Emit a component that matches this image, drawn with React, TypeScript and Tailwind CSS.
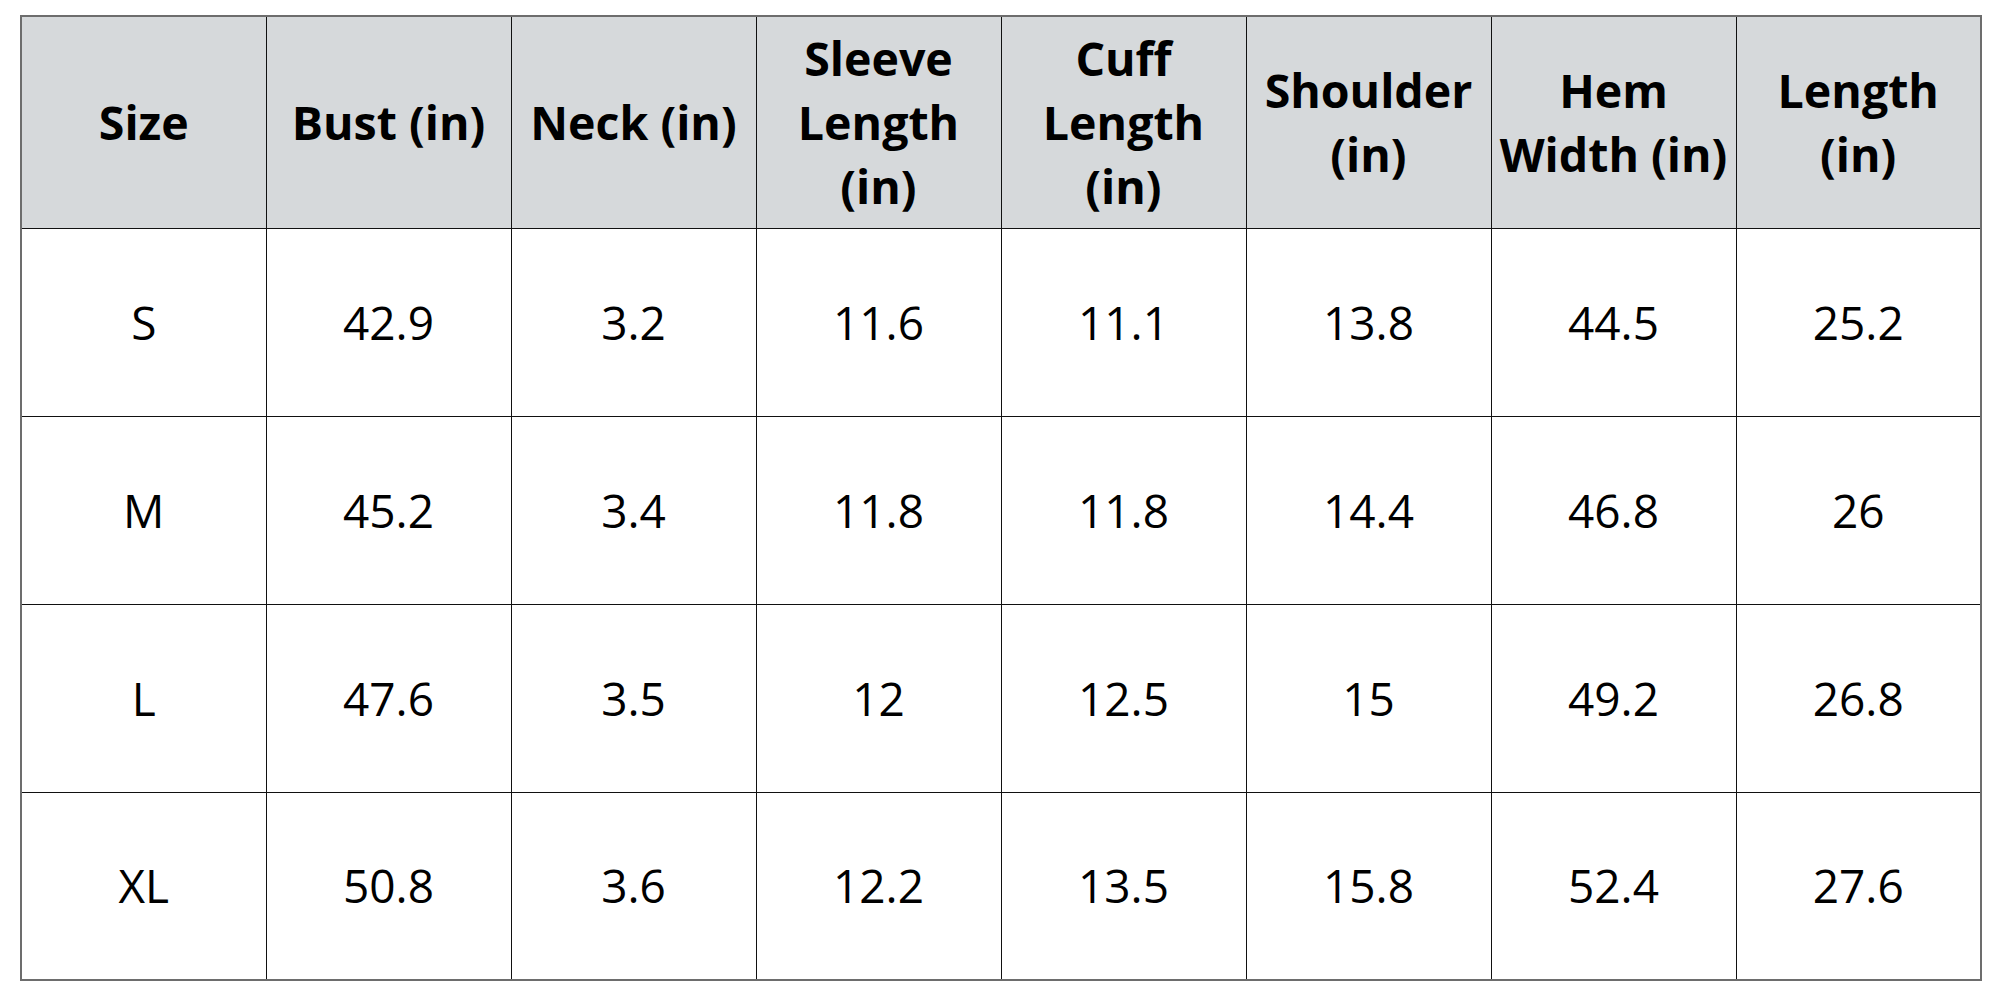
const headers = [
  'Size',
  'Bust (in)',
  'Neck (in)',
  'Sleeve Length (in)',
  'Cuff Length (in)',
  'Shoulder (in)',
  'Hem Width (in)',
  'Length (in)',
];

const rows = [
  ['S', '42.9', '3.2', '11.6', '11.1', '13.8', '44.5', '25.2'],
  ['M', '45.2', '3.4', '11.8', '11.8', '14.4', '46.8', '26'],
  ['L', '47.6', '3.5', '12', '12.5', '15', '49.2', '26.8'],
  ['XL', '50.8', '3.6', '12.2', '13.5', '15.8', '52.4', '27.6'],
];

export default function App() {
  return (
    <div
      className="w-[2000px] h-[1000px] bg-white pl-[20px] pt-[15px]"
      style={{ fontFamily: '"Open Sans", "Noto Sans", sans-serif' }}
    >
      <table className="w-[1962px] table-fixed border-collapse border-2 border-[#6d6d6d] text-black">
        <thead>
          <tr className="h-[212px] bg-[#d6d9db]">
            {headers.map((h) => (
              <th
                key={h}
                className="border border-[#111111] px-1 text-[46.5px] font-bold leading-[64px] text-center align-middle"
              >
                {h}
              </th>
            ))}
          </tr>
        </thead>
        <tbody>
          {rows.map((row) => (
            <tr key={row[0]} className="h-[188px]">
              {row.map((cell, i) => (
                <td
                  key={i}
                  className="border border-[#111111] px-2 text-[46px] font-normal text-center align-middle"
                >
                  {cell}
                </td>
              ))}
            </tr>
          ))}
        </tbody>
      </table>
    </div>
  );
}
